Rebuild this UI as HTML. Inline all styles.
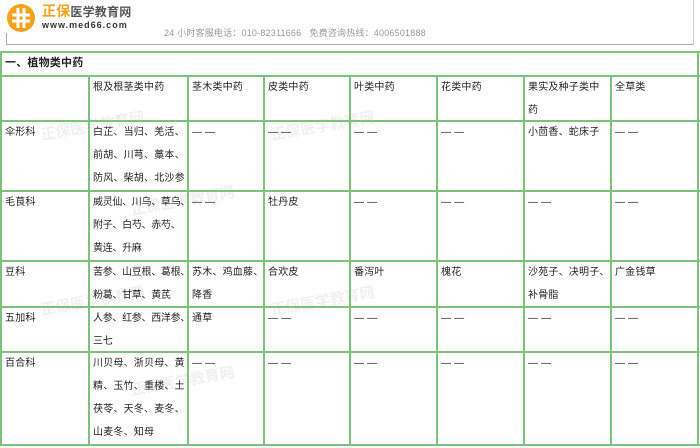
<!DOCTYPE html><html><head><meta charset="utf-8"><style>
body{margin:0;width:700px;height:448px;background:#fff;position:relative;overflow:hidden;font-family:"Liberation Sans","Noto Sans CJK SC",sans-serif;font-size:10px;color:#222}
.h{position:absolute;height:2px;background:#7cc27c}
.v{position:absolute;width:2px;background:#7cc27c}
.t{position:absolute;line-height:23px;white-space:nowrap;letter-spacing:0.2px}
.n{letter-spacing:-0.3px}
.wm{position:absolute;color:#f0f0f0;font-weight:bold;font-size:15px;transform:rotate(-10deg)}
</style></head><body>
<svg style="position:absolute;left:6px;top:3px" width="34" height="30" viewBox="0 0 34 30"><circle cx="15" cy="15" r="14" fill="#f4a21c"/><path d="M6 12h18M6 18h18M12 5v20M18 5v20" stroke="#fff" stroke-width="3"/></svg>
<div class="t" style="left:42px;top:2px;line-height:18px;font-size:14px;font-weight:bold"><span style="color:#f4a21c">正保</span><span style="color:#555;font-size:12px">医学教育网</span></div>
<div class="t" style="left:42px;top:19px;line-height:12px;font-size:9px;font-weight:bold;letter-spacing:1px;color:#333">www.med66.com</div>
<div class="t" style="left:164px;top:26px;line-height:14px;font-size:9px;color:#999">24 小时客服电话：010-82311666 &nbsp;&nbsp;免费咨询热线：4006501888</div>
<div style="position:absolute;left:6px;top:44px;width:688px;height:1px;background:#aaa"></div>
<div style="position:absolute;left:6px;top:33px;width:1px;height:12px;background:#aaa"></div>
<div style="position:absolute;left:693px;top:0;width:1px;height:45px;background:#ccc"></div>
<div class="wm" style="left:40px;top:115px">正保医学教育网</div>
<div class="wm" style="left:270px;top:115px">正保医学教育网</div>
<div class="wm" style="left:130px;top:190px">正保医学教育网</div>
<div class="wm" style="left:40px;top:290px">正保医学教育网</div>
<div class="wm" style="left:270px;top:290px">正保医学教育网</div>
<div class="wm" style="left:130px;top:370px">正保医学教育网</div>
<div class="h" style="left:0;top:51px;width:700px"></div>
<div class="h" style="left:0;top:75px;width:700px"></div>
<div class="h" style="left:0;top:120px;width:700px"></div>
<div class="h" style="left:0;top:190px;width:700px"></div>
<div class="h" style="left:0;top:260px;width:700px"></div>
<div class="h" style="left:0;top:306px;width:700px"></div>
<div class="h" style="left:0;top:351px;width:700px"></div>
<div class="h" style="left:0;top:444px;width:700px"></div>
<div class="v" style="left:0;top:51px;height:395px"></div>
<div class="v" style="left:697px;top:51px;height:395px"></div>
<div class="v" style="left:88px;top:75px;height:371px"></div>
<div class="v" style="left:187px;top:75px;height:371px"></div>
<div class="v" style="left:263px;top:75px;height:371px"></div>
<div class="v" style="left:349px;top:75px;height:371px"></div>
<div class="v" style="left:436px;top:75px;height:371px"></div>
<div class="v" style="left:523px;top:75px;height:371px"></div>
<div class="v" style="left:610px;top:75px;height:371px"></div>
<div class="t" style="left:5px;top:52px;font-weight:bold;font-size:11px">一、植物类中药</div>
<div class="t" style="left:93px;top:76px">根及根茎类中药</div>
<div class="t" style="left:192px;top:76px">茎木类中药</div>
<div class="t" style="left:268px;top:76px">皮类中药</div>
<div class="t" style="left:354px;top:76px">叶类中药</div>
<div class="t" style="left:441px;top:76px">花类中药</div>
<div class="t" style="left:528px;top:76px">果实及种子类中<br>药</div>
<div class="t" style="left:615px;top:76px">全草类</div>
<div class="t" style="left:5px;top:121px">伞形科</div>
<div class="t" style="left:93px;top:121px">白芷、当归、羌活、<br>前胡、川芎、藁本、<br>防风、柴胡、北沙参</div>
<div class="t" style="left:192px;top:121px">— —</div>
<div class="t" style="left:268px;top:121px">— —</div>
<div class="t" style="left:354px;top:121px">— —</div>
<div class="t" style="left:441px;top:121px">— —</div>
<div class="t" style="left:528px;top:121px">小茴香、蛇床子</div>
<div class="t" style="left:615px;top:121px">— —</div>
<div class="t" style="left:5px;top:191px">毛茛科</div>
<div class="t n" style="left:93px;top:191px">威灵仙、川乌、草乌、<br>附子、白芍、赤芍、<br>黄连、升麻</div>
<div class="t" style="left:192px;top:191px">— —</div>
<div class="t" style="left:268px;top:191px">牡丹皮</div>
<div class="t" style="left:354px;top:191px">— —</div>
<div class="t" style="left:441px;top:191px">— —</div>
<div class="t" style="left:528px;top:191px">— —</div>
<div class="t" style="left:615px;top:191px">— —</div>
<div class="t" style="left:5px;top:261px">豆科</div>
<div class="t n" style="left:93px;top:261px">苦参、山豆根、葛根、<br>粉葛、甘草、黄芪</div>
<div class="t" style="left:192px;top:261px">苏木、鸡血藤、<br>降香</div>
<div class="t" style="left:268px;top:261px">合欢皮</div>
<div class="t" style="left:354px;top:261px">番泻叶</div>
<div class="t" style="left:441px;top:261px">槐花</div>
<div class="t" style="left:528px;top:261px">沙苑子、决明子、<br>补骨脂</div>
<div class="t" style="left:615px;top:261px">广金钱草</div>
<div class="t" style="left:5px;top:307px">五加科</div>
<div class="t n" style="left:93px;top:307px">人参、红参、西洋参、<br>三七</div>
<div class="t" style="left:192px;top:307px">通草</div>
<div class="t" style="left:268px;top:307px">— —</div>
<div class="t" style="left:354px;top:307px">— —</div>
<div class="t" style="left:441px;top:307px">— —</div>
<div class="t" style="left:528px;top:307px">— —</div>
<div class="t" style="left:615px;top:307px">— —</div>
<div class="t" style="left:5px;top:352px">百合科</div>
<div class="t" style="left:93px;top:352px">川贝母、浙贝母、黄<br>精、玉竹、重楼、土<br>茯苓、天冬、麦冬、<br>山麦冬、知母</div>
<div class="t" style="left:192px;top:352px">— —</div>
<div class="t" style="left:268px;top:352px">— —</div>
<div class="t" style="left:354px;top:352px">— —</div>
<div class="t" style="left:441px;top:352px">— —</div>
<div class="t" style="left:528px;top:352px">— —</div>
<div class="t" style="left:615px;top:352px">— —</div>
</body></html>
